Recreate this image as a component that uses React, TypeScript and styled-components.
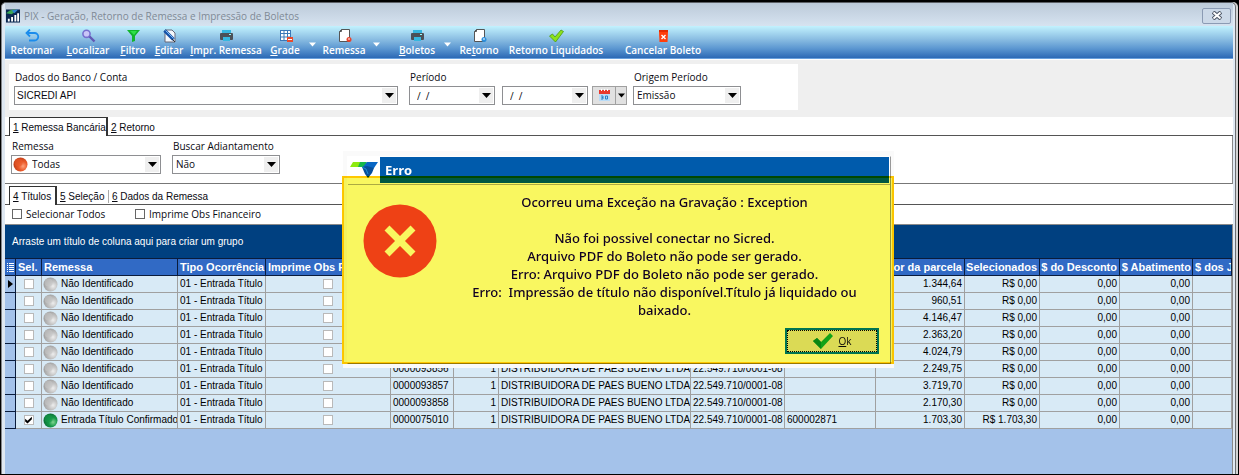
import React from "react";
import styled, { createGlobalStyle } from "styled-components";

const ui = `"Open Sans", "Noto Sans", sans-serif`;
const classic = `"Liberation Sans", Arial, sans-serif`;

const GlobalStyle = createGlobalStyle`
  * { box-sizing: border-box; }
  body { margin: 0; background: #000; font: 10px/14px ${ui}; color: #0a0a12; }
  button, input, select { font: inherit; color: inherit; margin: 0; padding: 0; }
`;

const Window = styled.div`
  position: relative;
  min-height: 100vh;
  display: flex;
  flex-direction: column;
  background: #000;
  padding: 2px 3px 1px 1px;
  overflow: hidden;
`;

const Frame = styled.div`
  flex: 1;
  display: flex;
  flex-direction: column;
  background: #dfe8f2;
  border-top: 1px solid #5c6066;
  border-left: 1px solid #85878b;
  border-right: 1px solid #6c6e72;
  border-radius: 5px 5px 0 0;
  box-shadow: 2px 0 0 #d4d4d4;
  padding: 0 2px 0 3px;
  min-width: 0;
`;

const TitleBar = styled.header`
  display: flex;
  align-items: center;
  height: 23px;
  gap: 4px;
  padding: 2px 2px 0 1px;
  background: linear-gradient(#bccad9, #d6e3f0);
`;

const Title = styled.h1`
  flex: 1;
  margin: 0;
  font: 10px/16px ${ui};
  color: #808a96;
`;

const CloseButton = styled.button`
  width: 29px;
  height: 16px;
  display: flex;
  align-items: center;
  justify-content: center;
  border: 1px solid #8b9bb4;
  border-radius: 2px;
  background: #ccd9e8;
`;

const Toolbar = styled.nav`
  display: flex;
  height: 33px;
  background: linear-gradient(#c2f2fe, #8cbfe3 40%, #5c97d1 70%, #2c69b5);
  border-bottom: 1px solid #6aa0dc;
`;

const Tool = styled.button<{ $w: number; $before?: number }>`
  width: ${(p) => p.$w}px;
  margin-left: ${(p) => p.$before ?? 0}px;
  flex: none;
  display: flex;
  flex-direction: column;
  align-items: center;
  padding-top: 3px;
  border: 0;
  background: none;
  color: #fff;
  font: 600 10px/14px ${ui};
  white-space: nowrap;
  svg { display: block; }
`;

const ToolArrow = styled.button`
  width: 10px;
  flex: none;
  border: 0;
  background: none;
  display: flex;
  justify-content: center;
  padding-top: 16px;
`;

const FilterBand = styled.section`
  background: #efefef;
  border-top: 1px solid #fff;
  padding: 4px 0 7px 4px;
`;

const FilterPanel = styled.div`
  max-width: 789px;
  height: 46px;
  display: flex;
  align-items: flex-start;
  padding: 6px 6px 0 5px;
  background: #fff;
`;

const Field = styled.div<{ $w: number; $gap?: number }>`
  width: ${(p) => p.$w}px;
  margin-right: ${(p) => p.$gap ?? 0}px;
  display: flex;
  flex-direction: column;
  gap: 2px;
`;

const Label = styled.label`
  line-height: 14px;
  padding-left: 1px;
  white-space: nowrap;
`;

const Inputs = styled.div`
  display: flex;
  align-items: flex-start;
`;

const Box = styled.div<{ $w?: number; $gap?: number }>`
  width: ${(p) => (p.$w ? p.$w + "px" : "100%")};
  margin-right: ${(p) => p.$gap ?? 0}px;
  flex: none;
  height: 19px;
  display: grid;
  grid-template-columns: auto 1fr 14px;
  align-items: center;
  border: 1px solid #8e8f92;
  background: #fff;
  padding: 1px;
`;

const Select = styled.select<{ $indent?: number; $classic?: boolean }>`
  grid-area: 1 / 1 / 2 / 4;
  appearance: none;
  width: 100%;
  height: 15px;
  border: 0;
  background: transparent;
  padding-left: ${(p) => p.$indent ?? 1}px;
  font-family: ${(p) => (p.$classic ? classic : ui)};
  line-height: 15px;
`;

const TextInput = styled.input`
  grid-area: 1 / 1 / 2 / 3;
  width: 100%;
  height: 15px;
  border: 0;
  outline: 0;
  background: transparent;
  padding-left: 6px;
  white-space: pre;
`;

const ArrowCell = styled.span`
  grid-area: 1 / 3 / 2 / 4;
  height: 15px;
  display: flex;
  align-items: center;
  justify-content: center;
  background: #efefef;
  pointer-events: none;
`;

const IconCell = styled.span`
  grid-area: 1 / 1 / 2 / 2;
  display: flex;
  pointer-events: none;
`;

const SplitButton = styled.div`
  display: flex;
  height: 19px;
  border: 1px solid #a0a0a0;
  button {
    display: flex;
    align-items: center;
    justify-content: center;
    border: 0;
    background: #e1e1e1;
    width: 22px;
  }
  button + button { width: 11px; border-left: 1px solid #a0a0a0; }
`;

const Content = styled.main`
  flex: 1;
  display: flex;
  flex-direction: column;
  background: #fff;
  min-width: 0;
`;

const TabStrip = styled.div`
  display: flex;
  align-items: flex-end;
  height: 19px;
  padding-left: 4px;
  border-bottom: 1px solid #555;
`;

const Tab = styled.button<{ $active?: boolean; $w: number; $divider?: boolean }>`
  width: ${(p) => p.$w}px;
  height: ${(p) => (p.$active ? 19 : 13)}px;
  margin-bottom: ${(p) => (p.$active ? -1 : 1)}px;
  padding: 0 0 0 3px;
  text-align: left;
  white-space: nowrap;
  font: 10px/13px ${classic};
  background: #fff;
  border: 0 solid #222;
  border-width: ${(p) => (p.$active ? "1px 2px 0 1px" : p.$divider ? "0 0 0 1px" : "0")};
  border-color: ${(p) => (p.$divider ? "#aaa" : "#333")};
`;

const Panel = styled.section`
  height: 48px;
  display: flex;
  padding: 3px 0 0 6px;
  border-right: 1px solid #888;
  border-bottom: 1px solid #777;
  margin-bottom: 2px;
`;

const CheckRow = styled.div`
  display: flex;
  height: 20px;
  align-items: center;
  padding: 0 0 1px 7px;
  border-bottom: 1px solid #8a8a8a;
`;

const CheckLabel = styled.label<{ $w: number }>`
  width: ${(p) => p.$w}px;
  display: flex;
  align-items: center;
  gap: 4px;
  white-space: nowrap;
`;

const Check = styled.input.attrs({ type: "checkbox" })<{ $soft?: boolean }>`
  appearance: none;
  flex: none;
  display: block;
  margin: ${(p) => (p.$soft ? "0 auto" : "0")};
  width: 10px;
  height: 10px;
  border: 1px solid ${(p) => (p.$soft ? "#b9b9b9" : "#666")};
  background: #fff;
  &:checked::before {
    content: "";
    display: block;
    height: 8px;
    background: #000;
    clip-path: polygon(8% 35%, 38% 60%, 92% 8%, 92% 40%, 38% 95%, 8% 70%);
  }
`;

const Grid = styled.section`
  flex: 1;
  display: flex;
  flex-direction: column;
  background: #a4c2ea;
  border-right: 1px solid #8a8a8a;
  overflow: hidden;
  font-family: ${classic};
`;

const GroupBar = styled.div`
  height: 33px;
  flex: none;
  display: flex;
  align-items: center;
  padding: 1px 0 0 7px;
  background: #004080;
  color: #fff;
`;

const Table = styled.table`
  width: 100%;
  table-layout: fixed;
  border-collapse: separate;
  border-spacing: 0;
  font: 10px/14px ${classic};
  color: #000;
  th, td {
    overflow: hidden;
    white-space: nowrap;
    text-align: left;
    padding: 0 2px;
  }
  th {
    height: 18px;
    background: #316ac5;
    color: #fff;
    font-size: 11px;
    border: solid #0a1c3c;
    border-width: 1px 1px 1px 0;
  }
  td {
    height: 17px;
    background: #d8eaf6;
    border: solid #a0a0a0;
    border-width: 0 1px 1px 0;
  }
`;

const MarkCell = styled.td`
  && { background: #a4c2ea; border-color: #0a1c3c; padding: 0 0 0 3px; }
  svg { display: block; }
`;

const Cell = styled.td<{ $align?: "right" | "center" }>`
  && { text-align: ${(p) => p.$align ?? "left"}; }
`;

const StatusCell = styled.td`
  && { padding: 0 0 0 1px; }
`;

const HeadCell = styled.th<{ $align?: "right" }>`
  && { text-align: ${(p) => p.$align ?? "left"}; direction: ${(p) => (p.$align ? "rtl" : "ltr")}; }
  bdi { direction: ltr; }
  svg { display: block; }
`;

const Status = styled.span`
  display: flex;
  align-items: center;
  gap: 3px;
  height: 16px;
  svg { flex: none; }
`;

const Overlay = styled.div`
  position: absolute;
  inset: 0;
  display: flex;
  justify-content: center;
  align-items: flex-start;
  padding: 151px 2px 0 0;
`;

const Dialog = styled.div`
  position: relative;
  isolation: isolate;
  width: 551px;
  background: #fafafa;
  padding: 5px 3px 4px 4px;
`;

const DialogFrame = styled.div`
  background: #fff;
  border: 1px solid #fff;
  border-right-color: #999;
  border-bottom-color: #999;
`;

const DialogHead = styled.div`
  display: flex;
  align-items: flex-start;
  height: 28px;
  border-bottom: 1px solid #b0b0b0;
`;

const LogoCell = styled.div`
  width: 32px;
  padding: 4px 0 0 2px;
  svg { display: block; }
`;

const DialogTitle = styled.h2`
  flex: 1;
  margin: 0 1px 0 0;
  height: 26px;
  padding-left: 5px;
  background: #005bac;
  color: #fff;
  font: 700 13px/26px ${ui};
`;

const DialogBody = styled.div`
  display: flex;
  padding: 8px 26px 0 15px;
  height: 143px;
`;

const ErrorIcon = styled.div`
  padding-top: 11px;
`;

const Message = styled.p`
  flex: 1;
  margin: 0;
  padding-left: 28px;
  text-align: center;
  white-space: pre-line;
  font: 500 13px/18px "Noto Sans", "Open Sans", sans-serif;
  color: #10005a;
`;

const DialogFoot = styled.div`
  display: flex;
  justify-content: flex-end;
  padding: 0 11px 9px 0;
`;

const OkButton = styled.button`
  width: 94px;
  height: 26px;
  display: flex;
  align-items: center;
  justify-content: center;
  gap: 4px;
  border: 2px solid #0078d7;
  background: #e1e1e1;
  outline: 1px dotted #000;
  outline-offset: -3px;
`;

const Highlight = styled.div`
  position: absolute;
  inset: 25px 0 4px -1px;
  border: 2px solid #ffc800;
  background: #f9f760;
  mix-blend-mode: multiply;
  pointer-events: none;
`;

const Arrow = ({ c = "#000", w = 9 }: { c?: string; w?: number }) => (
  <svg width={w} height="5" viewBox="0 0 9 5"><path d="M0 0h9L4.500 5z" fill={c} /></svg>
);

const Ball = ({ kind }: { kind: "gray" | "green" | "orange" }) => {
  const colors = {
    gray: ["#eeeeee", "#c4c4c4", "#9c9c9c"],
    green: ["#7fd690", "#16994a", "#0b6b33"],
    orange: ["#ffa27c", "#ea5a2a", "#bb3b16"],
  }[kind];
  const id = `ball-${kind}`;
  return (
    <svg width="15" height="15" viewBox="0 0 15 15">
      <defs>
        <radialGradient id={id} cx="0.68" cy="0.62" r="0.7">
          <stop offset="0" stopColor={colors[0]} />
          <stop offset="0.45" stopColor={colors[1]} />
          <stop offset="1" stopColor={colors[2]} />
        </radialGradient>
      </defs>
      <circle cx="7.5" cy="7.500" r="7" fill={`url(#${id})`} />
      <circle cx="5.500" cy="5.500" r="4" fill={colors[1]} opacity="0.6" />
    </svg>
  );
};

const Icon = ({ children }: { children: React.ReactNode }) => (
  <svg width="15" height="14" viewBox="0 0 15 14">{children}</svg>
);

const UndoIcon = () => (
  <Icon><path d="M3 4h6.500a3.700 3.700 0 0 1 0 7.500H4" fill="none" stroke="#1b8cec" strokeWidth="1.800" /><path d="M5 .5L1.500 4 5 7.500" fill="none" stroke="#1b8cec" strokeWidth="1.800" /></Icon>
);
const SearchIcon = () => (
  <Icon><circle cx="5.500" cy="4.800" r="3.600" fill="#c9c6f7" stroke="#7770d0" strokeWidth="1.600" /><path d="M8.500 7.500l5 5" stroke="#6258b4" strokeWidth="2.400" /></Icon>
);
const FunnelIcon = () => (
  <Icon><path d="M1 1h13L9 7v5l-3 1V7z" fill="#12b52c" /><path d="M4 2h7L8 6z" fill="#2ee04a" /></Icon>
);
const EditIcon = () => (
  <Icon><path d="M3 1h7l3 3v9H3z" fill="#f4f8fc" stroke="#667" /><path d="M2.500 1.500l9 9" stroke="#1552a8" strokeWidth="3.400" /><path d="M3.500 1.500l8 8" stroke="#7db8f0" /><path d="M10 10l3 3" stroke="#333" /></Icon>
);
const PrinterIcon = () => (
  <Icon><rect x="3" y="1" width="9" height="4" fill="#36b7e0" /><rect x="1" y="4" width="13" height="7" rx="1" fill="#4b5158" /><rect x="4" y="8" width="7" height="4" fill="#36b7e0" /><rect x="10" y="5" width="2" height="1" fill="#9ff" /></Icon>
);
const TableIcon = () => (
  <Icon><rect x="2.500" y="1.500" width="10" height="10" fill="#fff" stroke="#3b78b8" /><path d="M2 4.500h11M2 8h11M6 1v11M9.500 1v11" stroke="#3b78b8" /><rect x="9" y="8" width="6" height="5" fill="#e84b2c" /><rect x="10" y="10" width="4" height="1" fill="#fff" /></Icon>
);
const PageIcon = ({ dot }: { dot: string }) => (
  <Icon><path d="M4.500.5h8v12h-10v-10z" fill="#fff" stroke="#555" /><path d="M4.500.5v2h-2" fill="none" stroke="#555" /><circle cx="12" cy="10.500" r="2.500" fill={dot} /><path d="M12 9v2" stroke="#fff" /></Icon>
);
const CheckIcon = () => (
  <Icon><path d="M.5 7l3-2L6 8l6-7 2.500 1.500L6.500 13z" fill="#8ce21c" stroke="#4c9b10" strokeWidth="0.800" /></Icon>
);
const TrashIcon = () => (
  <Icon><path d="M3 3h9l-.5 10h-8z" fill="#ff3d0a" /><rect x="3" y="1" width="9" height="2" fill="#e22b00" /><path d="M5.500 6l4 4M9.500 6l-4 4" stroke="#fff" strokeWidth="1.400" /></Icon>
);
const CalendarIcon = () => (
  <svg width="13" height="13" viewBox="0 0 13 13"><rect x="1" y="2" width="11" height="10" fill="#b9dcf8" /><rect x="1" y="1" width="11" height="4" fill="#e8392e" /><path d="M3.500 0v2M6.500 0v2M9.500 0v2" stroke="#fff" /><path d="M3 7h2v3H3M5 8.500H3.500M7.500 7h2v3h-2z" fill="none" stroke="#2a7fc8" /></svg>
);
const AppIcon = () => (
  <svg width="14" height="14" viewBox="0 0 15 14"><rect width="15" height="14" fill="#0a2750" /><path d="M0 4Q6-2 12 1L6 5z" fill="#3aa655" /><path d="M6 1l7-1-4 4z" fill="#2c7fd8" /><path d="M2 13v-3h2v3zM5.500 13V8h2v5zM9 13V6h2v7zM12 13V4h2v9z" fill="#fff" /></svg>
);
const CloseIcon = () => (
  <svg width="10" height="9" viewBox="0 0 10 9"><path d="M1 1l8 7M9 1l-8 7" stroke="#4c5565" strokeWidth="4" /><path d="M1.500 1.500l7 6M8.500 1.500l-7 6" stroke="#fff" strokeWidth="2" /></svg>
);
const BrandLogo = () => (
  <svg width="29" height="18" viewBox="0 0 29 18">
    <path d="M3 1h13l-3 5H0z" fill="#8eea10" /><path d="M10 1h7l-3 5H8z" fill="#16b84a" />
    <path d="M17 1h11l-4 6H12z" fill="#0866c4" /><path d="M12 6l5-1 7 2-2 5-4 5-3-4z" fill="#064f9c" /><path d="M12 6l4 2 2 5" fill="none" stroke="#1d8fd0" />
  </svg>
);

const tools: { icon: React.ReactNode; label: React.ReactNode; w: number; before?: number; arrow?: boolean }[] = [
  { icon: <UndoIcon />, label: "Retornar", w: 54 },
  { icon: <SearchIcon />, label: <span><u>L</u>ocalizar</span>, w: 58 },
  { icon: <FunnelIcon />, label: <span><u>F</u>iltro</span>, w: 32 },
  { icon: <EditIcon />, label: <span><u>E</u>ditar</span>, w: 40 },
  { icon: <PrinterIcon />, label: <span><u>I</u>mpr. Remessa</span>, w: 74 },
  { icon: <TableIcon />, label: <span><u>G</u>rade</span>, w: 44, arrow: true },
  { icon: <PageIcon dot="#e8432c" />, label: "Remessa", w: 54, arrow: true },
  { icon: <PrinterIcon />, label: <span><u>B</u>oletos</span>, w: 50, before: 11, arrow: true },
  { icon: <PageIcon dot="#2c8fdc" />, label: <span>Re<u>t</u>orno</span>, w: 54 },
  { icon: <CheckIcon />, label: "Retorno Liquidados", w: 100 },
  { icon: <TrashIcon />, label: "Cancelar Boleto", w: 82, before: 16 },
];

const widths = [11, 26, 136, 88, 125, 63, 45, 192, 94, 91, 89, 75, 80, 73];

const company = "DISTRIBUIDORA DE PAES BUENO LTDA";
const taxId = "22.549.710/0001-08";
const rows = [
  { value: "1.344,64" },
  { value: "960,51" },
  { value: "4.146,47" },
  { value: "2.363,20" },
  { value: "4.024,79" },
  { value: "2.249,75", doc: "0000093856" },
  { value: "3.719,70", doc: "0000093857" },
  { value: "2.170,30", doc: "0000093858" },
  { value: "1.703,30", doc: "0000075010", number: "600002871", confirmed: true },
];

export default function App() {
  return (
    <Window>
      <GlobalStyle />
      <Frame>
        <TitleBar>
          <AppIcon />
          <Title>PIX - Geração, Retorno de Remessa e Impressão de Boletos</Title>
          <CloseButton aria-label="Fechar"><CloseIcon /></CloseButton>
        </TitleBar>
        <Toolbar>
          {tools.map((t, i) => (
            <React.Fragment key={i}>
              <Tool $w={t.w} $before={t.before}>{t.icon}{t.label}</Tool>
              {t.arrow && <ToolArrow aria-label="Mais opções"><Arrow c="#fff" w={7} /></ToolArrow>}
            </React.Fragment>
          ))}
        </Toolbar>
        <FilterBand>
          <FilterPanel>
            <Field $w={384} $gap={11}>
              <Label htmlFor="conta">Dados do Banco / Conta</Label>
              <Box>
                <Select id="conta" $classic><option>SICREDI API</option></Select>
                <ArrowCell><Arrow /></ArrowCell>
              </Box>
            </Field>
            <Field $w={218} $gap={6}>
              <Label htmlFor="inicio">Período</Label>
              <Inputs>
                <Box $w={86} $gap={7}>
                  <TextInput id="inicio" defaultValue="/  /" />
                  <ArrowCell><Arrow /></ArrowCell>
                </Box>
                <Box $w={86} $gap={4}>
                  <TextInput aria-label="Período final" defaultValue="/  /" />
                  <ArrowCell><Arrow /></ArrowCell>
                </Box>
                <SplitButton>
                  <button aria-label="Calendário"><CalendarIcon /></button>
                  <button aria-label="Opções do calendário"><Arrow w={7} /></button>
                </SplitButton>
              </Inputs>
            </Field>
            <Field $w={108}>
              <Label htmlFor="origem">Origem Período</Label>
              <Box>
                <Select id="origem" $indent={2}><option>Emissão</option></Select>
                <ArrowCell><Arrow /></ArrowCell>
              </Box>
            </Field>
          </FilterPanel>
        </FilterBand>
        <Content>
          <TabStrip>
            <Tab $active $w={99}><u>1</u> Remessa Bancária</Tab>
            <Tab $w={60}><u>2</u> Retorno</Tab>
          </TabStrip>
          <Panel>
            <Field $w={150} $gap={11}>
              <Label htmlFor="remessa">Remessa</Label>
              <Box>
                <Select id="remessa" $indent={19}><option>Todas</option></Select>
                <IconCell><Ball kind="orange" /></IconCell>
                <ArrowCell><Arrow /></ArrowCell>
              </Box>
            </Field>
            <Field $w={108}>
              <Label htmlFor="adiantamento">Buscar Adiantamento</Label>
              <Box>
                <Select id="adiantamento" $indent={2}><option>Não</option></Select>
                <ArrowCell><Arrow /></ArrowCell>
              </Box>
            </Field>
          </Panel>
          <TabStrip>
            <Tab $active $w={48}><u>4</u> Títulos</Tab>
            <Tab $w={51}><u>5</u> Seleção</Tab>
            <Tab $w={110} $divider><u>6</u> Dados da Remessa</Tab>
          </TabStrip>
          <CheckRow>
            <CheckLabel $w={123}><Check />Selecionar Todos</CheckLabel>
            <CheckLabel $w={140}><Check />Imprime Obs Financeiro</CheckLabel>
          </CheckRow>
          <Grid>
            <GroupBar>Arraste um título de coluna aqui para criar um grupo</GroupBar>
            <Table>
              <colgroup>
                {widths.map((w, i) => <col key={i} width={w} />)}
                <col />
              </colgroup>
              <thead>
                <tr>
                  <HeadCell aria-label="Linha">
                    <svg width="7" height="9" viewBox="0 0 7 9"><path d="M0 .5h1M2 .5h5M0 2.500h1M2 2.500h5M0 4.500h1M2 4.500h5M0 6.500h1M2 6.500h5M0 8.500h1M2 8.500h5" stroke="#fff" /></svg>
                  </HeadCell>
                  <HeadCell>Sel.</HeadCell>
                  <HeadCell>Remessa</HeadCell>
                  <HeadCell>Tipo Ocorrência</HeadCell>
                  <HeadCell>Imprime Obs Financeiro</HeadCell>
                  <HeadCell />
                  <HeadCell />
                  <HeadCell />
                  <HeadCell />
                  <HeadCell />
                  <HeadCell $align="right"><bdi>Valor da parcela</bdi></HeadCell>
                  <HeadCell $align="right"><bdi>Selecionados</bdi></HeadCell>
                  <HeadCell $align="right"><bdi>$ do Desconto</bdi></HeadCell>
                  <HeadCell $align="right"><bdi>$ Abatimento</bdi></HeadCell>
                  <HeadCell>$ dos Juros</HeadCell>
                </tr>
              </thead>
              <tbody>
                {rows.map((r, i) => (
                  <tr key={i}>
                    <MarkCell>{i === 0 && <svg width="5" height="8" viewBox="0 0 5 8"><path d="M0 0l5 4-5 4z" fill="#000" /></svg>}</MarkCell>
                    <Cell $align="center"><Check $soft aria-label="Selecionar" defaultChecked={r.confirmed} /></Cell>
                    <StatusCell>
                      <Status>
                        <Ball kind={r.confirmed ? "green" : "gray"} />
                        {r.confirmed ? "Entrada Título Confirmado" : "Não Identificado"}
                      </Status>
                    </StatusCell>
                    <Cell>01 - Entrada Título</Cell>
                    <Cell $align="center"><Check $soft aria-label="Imprime Obs Financeiro" /></Cell>
                    <Cell>{r.doc}</Cell>
                    <Cell $align="right">{r.doc && "1"}</Cell>
                    <Cell>{r.doc && company}</Cell>
                    <Cell>{r.doc && taxId}</Cell>
                    <Cell>{r.number}</Cell>
                    <Cell $align="right">{r.value}</Cell>
                    <Cell $align="right">{r.confirmed ? "R$ 1.703,30" : "R$ 0,00"}</Cell>
                    <Cell $align="right">0,00</Cell>
                    <Cell $align="right">0,00</Cell>
                    <Cell />
                  </tr>
                ))}
              </tbody>
            </Table>
          </Grid>
        </Content>
      </Frame>
      <Overlay>
        <Dialog role="dialog" aria-labelledby="erro">
          <DialogFrame>
            <DialogHead>
              <LogoCell><BrandLogo /></LogoCell>
              <DialogTitle id="erro">Erro</DialogTitle>
            </DialogHead>
            <DialogBody>
              <ErrorIcon>
                <svg width="74" height="74" viewBox="0 0 74 74">
                  <circle cx="37" cy="37" r="36.500" fill="#f44336" />
                  <path d="M24 24l26 26M50 24L24 50" stroke="#fff" strokeWidth="7" />
                </svg>
              </ErrorIcon>
              <Message>
                {"Ocorreu uma Exceção na Gravação : Exception\n\nNão foi possivel conectar no Sicred.\nArquivo PDF do Boleto não pode ser gerado.\nErro: Arquivo PDF do Boleto não pode ser gerado.\nErro:\u00a0 Impressão de título não disponível.Título já liquidado ou\nbaixado."}
              </Message>
            </DialogBody>
            <DialogFoot>
              <OkButton>
                <svg width="22" height="18" viewBox="0 0 22 18"><path d="M1 9l4-3 4 4L18 1l3 3L9 17z" fill="#12a83c" /><path d="M1 9l4-3 4 4v7z" fill="#0b8a30" /></svg>
                <span><u>O</u>k</span>
              </OkButton>
            </DialogFoot>
          </DialogFrame>
          <Highlight />
        </Dialog>
      </Overlay>
    </Window>
  );
}
